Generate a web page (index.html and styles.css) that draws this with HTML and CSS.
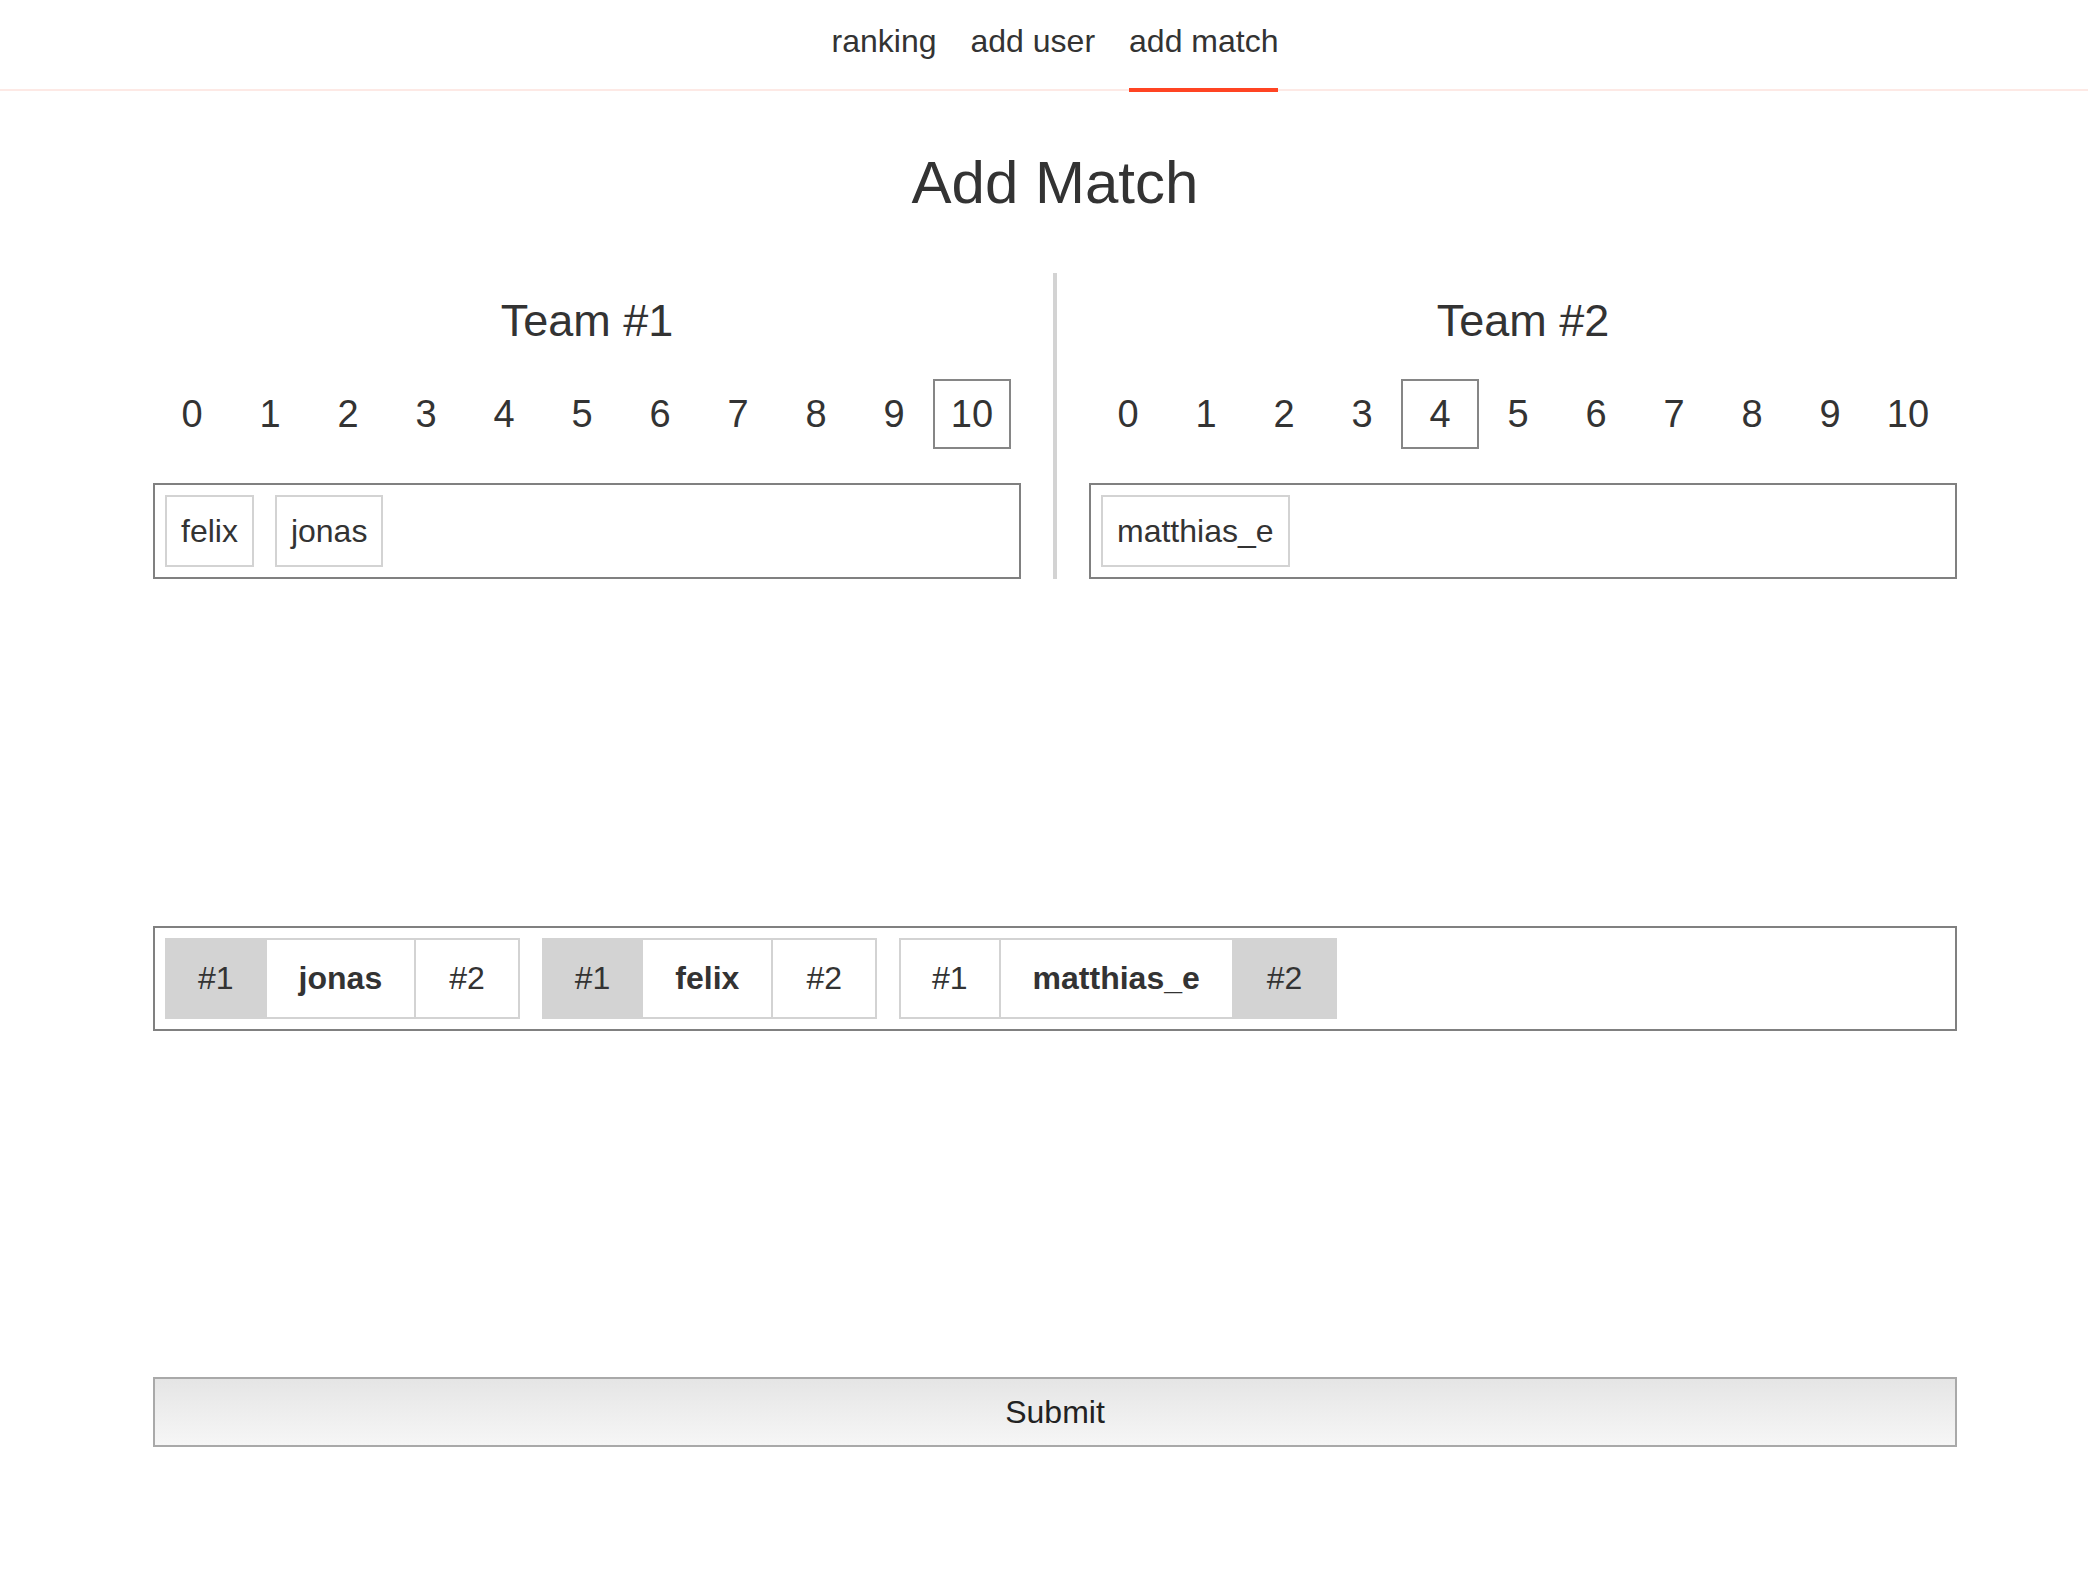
FILE: index.html
```html
<!DOCTYPE html>
<html lang="en">
<head>
<meta charset="utf-8">
<title>Add Match</title>
<link rel="stylesheet" href="styles.css">
</head>
<body>
<header class="nav">
  <a class="nav-link" href="#">ranking</a>
  <a class="nav-link" href="#">add user</a>
  <a class="nav-link active" href="#">add match</a>
</header>
<main class="page">
  <h1 class="title">Add Match</h1>
  <section class="teams">
    <div class="team">
      <h2 class="team-title">Team #1</h2>
      <div class="scores">
        <span class="score">0</span><span class="score">1</span><span class="score">2</span><span class="score">3</span><span class="score">4</span><span class="score">5</span><span class="score">6</span><span class="score">7</span><span class="score">8</span><span class="score">9</span><span class="score selected">10</span>
      </div>
      <div class="players">
        <span class="chip">felix</span>
        <span class="chip">jonas</span>
      </div>
    </div>
    <div class="divider"></div>
    <div class="team">
      <h2 class="team-title">Team #2</h2>
      <div class="scores">
        <span class="score">0</span><span class="score">1</span><span class="score">2</span><span class="score">3</span><span class="score selected">4</span><span class="score">5</span><span class="score">6</span><span class="score">7</span><span class="score">8</span><span class="score">9</span><span class="score">10</span>
      </div>
      <div class="players">
        <span class="chip">matthias_e</span>
      </div>
    </div>
  </section>
  <section class="order">
    <div class="group">
      <span class="cell slot active">#1</span>
      <span class="cell name">jonas</span>
      <span class="cell slot">#2</span>
    </div>
    <div class="group">
      <span class="cell slot active">#1</span>
      <span class="cell name">felix</span>
      <span class="cell slot">#2</span>
    </div>
    <div class="group">
      <span class="cell slot">#1</span>
      <span class="cell name">matthias_e</span>
      <span class="cell slot active">#2</span>
    </div>
  </section>
  <button class="submit" type="button">Submit</button>
</main>
</body>
</html>
```
FILE: styles.css
```css
* {
  box-sizing: border-box;
}

body {
  margin: 0;
  background: #ffffff;
  color: #333333;
  font-family: "Liberation Sans", Arial, Helvetica, sans-serif;
}

.nav {
  display: flex;
  justify-content: center;
  gap: 34px;
  height: 91px;
  padding: 0 131px 0 153px;
  border-bottom: 2px solid #fde9e5;
}

.nav-link {
  display: block;
  align-self: flex-start;
  height: 92px;
  padding-top: 23px;
  font-size: 32px;
  line-height: 36px;
  color: #333333;
  text-decoration: none;
  border-bottom: 4px solid transparent;
}

.nav-link.active {
  border-bottom-color: #ff4423;
}

.page {
  margin: 0 131px 0 153px;
  display: flex;
  flex-direction: column;
}

.title {
  margin: 56px 0 0;
  font-size: 60px;
  line-height: 72px;
  font-weight: normal;
  text-align: center;
  color: #333333;
}

.teams {
  margin-top: 54px;
  display: grid;
  grid-template-columns: 1fr 4px 1fr;
  column-gap: 32px;
}

.divider {
  background: #d3d3d3;
}

.team {
  padding-top: 21px;
}

.team-title {
  margin: 0;
  font-size: 45px;
  line-height: 54px;
  font-weight: normal;
  text-align: center;
  color: #333333;
}

.scores {
  margin-top: 31px;
  padding-right: 10px;
  display: flex;
  justify-content: center;
}

.score {
  width: 78px;
  height: 70px;
  border: 2px solid transparent;
  display: flex;
  align-items: center;
  justify-content: center;
  font-size: 38px;
}

.score.selected {
  border-color: #868686;
}

.players {
  margin-top: 34px;
  height: 96px;
  border: 2px solid #808080;
  padding: 10px;
  display: flex;
  gap: 21px;
}

.chip {
  height: 72px;
  border: 2px solid #d3d3d3;
  padding: 0 14px;
  display: flex;
  align-items: center;
  font-size: 32px;
}

.order {
  margin-top: 347px;
  height: 105px;
  border: 2px solid #808080;
  padding: 10px;
  display: flex;
  gap: 22px;
}

.group {
  display: flex;
  height: 81px;
  border: 2px solid #d3d3d3;
}

.cell {
  display: flex;
  align-items: center;
  padding: 0 32px;
  font-size: 32px;
  border-left: 2px solid #d3d3d3;
}

.cell.slot {
  padding: 0 33px;
}

.cell:first-child {
  border-left: none;
  padding: 0 31px;
}

.cell.active {
  background: #d3d3d3;
}

.cell.name {
  font-weight: bold;
}

.submit {
  margin-top: 346px;
  width: 100%;
  height: 70px;
  border: 2px solid #a9a9a9;
  border-radius: 0;
  background: linear-gradient(#e5e5e5, #f6f6f6);
  font-family: "Liberation Sans", Arial, Helvetica, sans-serif;
  font-size: 32px;
  color: #222222;
}
```
